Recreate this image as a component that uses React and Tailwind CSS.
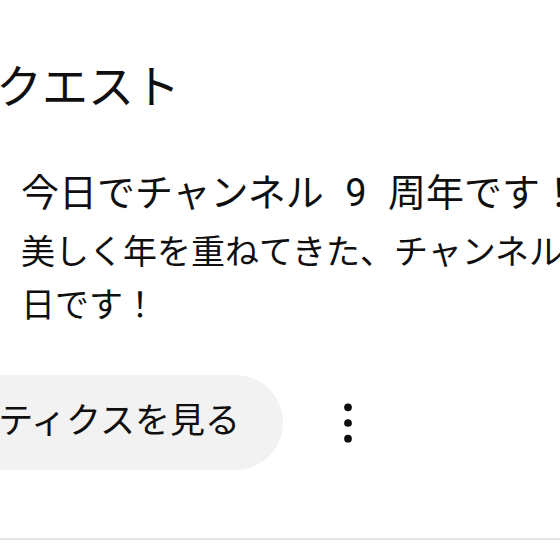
import React from 'react'

const FONT = { fontFamily: 'Roboto, "Noto Sans CJK JP", sans-serif' }

function MoreIcon() {
  return (
    <svg viewBox="0 0 24 24" className="w-[58px] h-[58px] shrink-0" fill="#0f0f0f">
      <circle cx="12" cy="5.5" r="1.6" />
      <circle cx="12" cy="12" r="1.6" />
      <circle cx="12" cy="18.5" r="1.6" />
    </svg>
  )
}

export default function App() {
  return (
    <div className="w-[560px] h-[560px] overflow-hidden bg-white text-[#0f0f0f]" style={FONT}>
      {/* タイトル */}
      <div className="pt-[59px] -ml-[50px] whitespace-nowrap text-[46px] leading-[56px]">
        リクエスト
      </div>

      {/* 投稿の本文 */}
      <div className="pl-[21px] mt-[50px] whitespace-nowrap">
        <p className="text-[38px] leading-[56px] [word-spacing:12px]">今日でチャンネル 9 周年です！</p>
        <p className="mt-[5px] text-[34px] leading-[53px]">
          美しく年を重ねてきた、チャンネルの誕生
          <br />
          日です！
        </p>
      </div>

      {/* 操作 */}
      <div className="mt-[43px] flex items-center gap-[36px]">
        <div className="-ml-[50px] w-[333px] h-[95px] rounded-full bg-[#f2f2f2] flex items-center justify-end pr-[43px] whitespace-nowrap text-[35px]">
          アナリティクスを見る
        </div>
        <MoreIcon />
      </div>

      <div className="mt-[68px] h-[2px] bg-[#e5e5e5]" />
    </div>
  )
}
